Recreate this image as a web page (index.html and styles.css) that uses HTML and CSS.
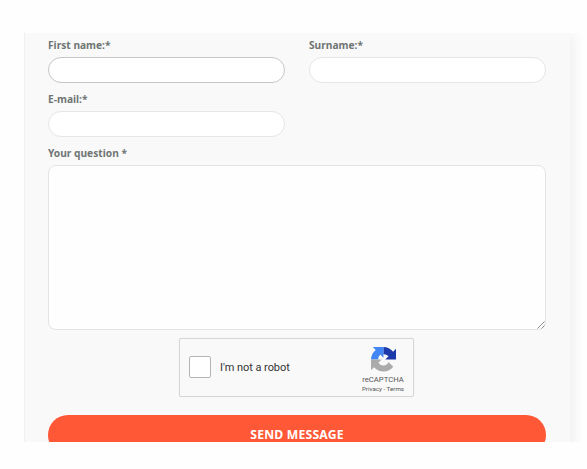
FILE: index.html
```html
<!DOCTYPE html>
<html lang="en">
<head>
    <meta charset="UTF-8">
    <meta name="viewport" content="width=device-width, initial-scale=1.0">
    <title>Contact form</title>
    <link rel="stylesheet" href="styles.css">
</head>
<body>

    <div class="form-view">
        <form class="contact-form">
            <div class="fields">
                <div class="field">
                    <label for="first-name">First name:*</label>
                    <input type="text" id="first-name" class="input active">
                </div>
                <div class="field">
                    <label for="surname">Surname:*</label>
                    <input type="text" id="surname" class="input">
                </div>
                <div class="field">
                    <label for="email">E-mail:*</label>
                    <input type="email" id="email" class="input">
                </div>
            </div>

            <div class="field">
                <label for="question">Your question *</label>
                <div class="question-box">
                    <textarea id="question" class="question"></textarea>
                    <svg class="grip" width="8" height="8" viewBox="0 0 8 8">
                        <path d="M0.5 7.5L7.5 0.5M4.5 7.5L7.5 4.5" stroke="#8c8c8c" fill="none"/>
                    </svg>
                </div>
            </div>

            <!-- Captcha -->
            <div class="captcha">
                <span class="checkbox"></span>
                <span class="captcha-text">I'm not a robot</span>
                <div class="captcha-brand">
                    <svg class="captcha-logo" width="25" height="25" viewBox="0 0 64 64">
                        <path fill="#1c3aa9" d="M64 31.96V4.6l-7.56 7.56A32 32 0 0 0 31.7 0v18.5a17 17 0 0 1 13.2 5.2L36.5 32z"/>
                        <path fill="#4285f4" d="M31.9 0H4.6l7.56 7.56A32 32 0 0 0 0 32.3h18.5a17 17 0 0 1 5.2-13.2l8.2 8.2z"/>
                        <path fill="#ababab" d="M0 32v27.4l7.56-7.56A32 32 0 0 0 57 50.5L44.6 38.1A14 14 0 0 1 19.1 40.3l8.3-8.3z"/>
                    </svg>
                    <span class="brand-name">reCAPTCHA</span>
                    <span class="brand-links">Privacy - Terms</span>
                </div>
            </div>

            <button type="button" class="send">SEND MESSAGE</button>
        </form>
    </div>

</body>
</html>
```
FILE: styles.css
```css
* {
    box-sizing: border-box;
}

body {
    margin: 0;
    background-color: #fefefe;
    font-family: "Noto Sans", sans-serif;
    overflow: hidden;
}

/* Visible part of the form, the rest is cut off */
.form-view {
    height: 409px;
    margin-top: 33px;
    padding-left: 24px;
    overflow: hidden;
}

.contact-form {
    width: 546px;
    height: 440px;
    padding: 4px 23px 0;
    background-color: #f9f9f9;
    border-left: 1px solid #f0f0f0;
    box-shadow: 4px 0 12px rgba(0, 0, 0, 0.06);
    clip-path: inset(0 -17px 0 0);
}

.fields {
    display: grid;
    grid-template-columns: 237px 237px;
    column-gap: 24px;
}

.field {
    display: flex;
    flex-direction: column;
}

.fields .field {
    height: 54px;
}

label {
    height: 20px;
    font-size: 10.2px;
    font-weight: 700;
    line-height: 16px;
    color: #6f7573;
    white-space: nowrap;
}

.input {
    width: 237px;
    height: 26px;
    padding: 0 12px;
    background-color: #fff;
    border: 1px solid #e6e6e6;
    border-radius: 13px;
    outline: none;
}

.input.active {
    border-color: #c6c6c6;
}

.question-box {
    position: relative;
    width: 498px;
    height: 165px;
}

.question {
    display: block;
    width: 100%;
    height: 100%;
    padding: 8px 12px;
    background-color: #fefefe;
    border: 1px solid #e4e4e4;
    border-radius: 8px;
    resize: none;
    outline: none;
}

.grip {
    position: absolute;
    right: 1px;
    bottom: 1px;
}

.captcha {
    display: flex;
    align-items: center;
    width: 235px;
    height: 59px;
    margin: 8px 0 0 131px;
    padding: 0 9px;
    background-color: #f9f9f9;
    border: 1px solid #d6d6d6;
    border-radius: 2px;
    box-shadow: 0 0 2px rgba(0, 0, 0, 0.06);
    font-family: Roboto, sans-serif;
}

.checkbox {
    width: 22px;
    height: 22px;
    margin-top: -2px;
    background-color: #fff;
    border: 1px solid #b5b5b5;
    border-radius: 2px;
}

.captcha-text {
    margin-left: 9px;
    font-size: 11px;
    line-height: 14px;
    letter-spacing: -0.05px;
    color: #333;
}

.captcha-brand {
    display: flex;
    flex-direction: column;
    align-items: center;
    width: 50px;
    margin-top: 5px;
    margin-left: auto;
    margin-right: -4px;
    color: #555;
    white-space: nowrap;
}

.brand-name {
    margin-top: 3px;
    font-size: 7.7px;
    line-height: 9px;
}

.brand-links {
    margin-top: 1px;
    font-size: 6.2px;
    line-height: 8px;
}

.send {
    display: block;
    width: 498px;
    height: 40px;
    margin-top: 18px;
    padding: 0;
    background-color: #ff5836;
    border: none;
    border-radius: 20px;
    color: #fff;
    font-family: "Noto Sans", sans-serif;
    font-size: 12.2px;
    font-weight: 700;
    line-height: 40px;
    letter-spacing: 0.2px;
}
```
